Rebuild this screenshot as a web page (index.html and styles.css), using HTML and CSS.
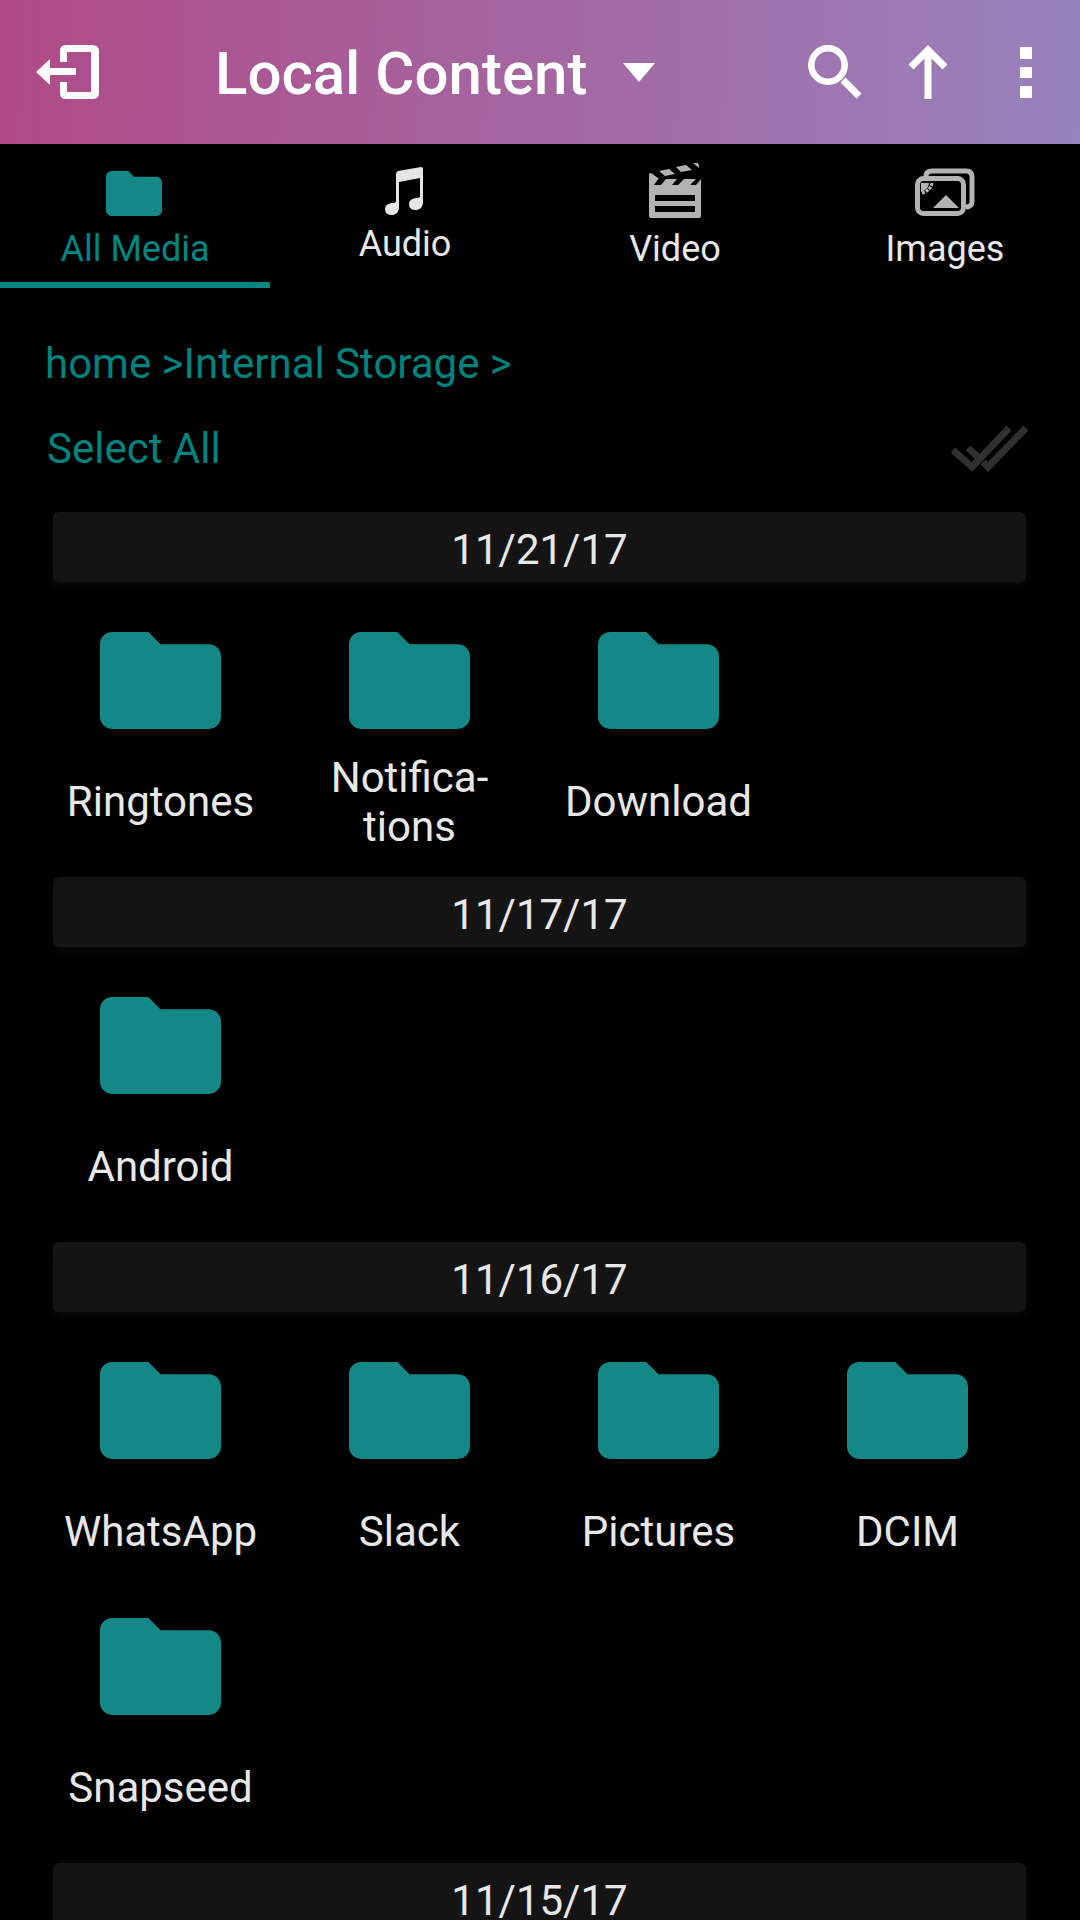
FILE: index.html
```html
<!DOCTYPE html>
<html lang="en">
<head>
<meta charset="utf-8">
<meta name="viewport" content="width=device-width, initial-scale=1">
<title>Local Content</title>
<link rel="stylesheet" href="styles.css">
</head>
<body>
<svg class="sprite" aria-hidden="true">
  <symbol id="folder" viewBox="2 4 20 16"><path d="M10 4H4c-1.100 0-2 .9-2 2v12c0 1.100.9 2 2 2h16c1.100 0 2-.9 2-2V8c0-1.100-.9-2-2-2h-8z"/></symbol>
</svg>
<header class="topbar">
  <button class="icon-button" aria-label="Exit">
    <svg width="63" height="54" viewBox="0 0 63 54" fill="#fff"><path d="M0 27 14 14v9h26v7H14v10zM24 17V6q0-6 6-6h26q7 0 7 6v42q0 6-7 6H30q-6 0-6-6V37h7v10h24V7H31v10z"/></svg>
  </button>
  <button class="source">
    <span>Local Content</span>
    <svg width="32" height="19" viewBox="0 0 32 19" fill="#fff"><path d="M0 0h32L16 19z"/></svg>
  </button>
  <div class="actions">
    <button class="icon-button" aria-label="Search">
      <svg width="54" height="54" viewBox="0 0 54 54" fill="none" stroke="#fff"><circle cx="20" cy="20" r="16.700" stroke-width="6.500"/><path d="M35 35 51 51" stroke-width="7"/></svg>
    </button>
    <button class="icon-button" aria-label="Up">
      <svg width="40" height="54" viewBox="0 0 40 54" fill="none" stroke="#fff" stroke-width="7"><path d="M20 54V6M3 22 20 5l17 17"/></svg>
    </button>
    <button class="icon-button" aria-label="More options">
      <svg width="12" height="54" viewBox="0 0 12 54" fill="#fff"><path d="M0 2h12v12H0zM0 22h12v11H0zM0 41h12v12H0z"/></svg>
    </button>
  </div>
</header>
<nav class="tabs">
  <button class="tab active">
    <svg width="60" height="66" viewBox="0 0 60 66"><use href="#folder" x="1" y="9" width="56" height="45"/></svg>
    <span>All Media</span>
  </button>
  <button class="tab">
    <svg width="60" height="56" viewBox="0 0 60 56" fill="#e6e6e6"><path d="M21 7q0-2 2-3L46 0q2 0 2 2v34q-1 7-7 7-7 0-7-6 0-5 7-6 4 0 4-2V11L24 15v26q-1 7-7 7-7 0-7-6 0-5 7-6 4 0 4-2z"/></svg>
    <span>Audio</span>
  </button>
  <button class="tab">
    <svg width="60" height="66" viewBox="0 0 60 66" fill="#b3b3b3"><path d="M4 13q0-2 2-2l7 5h1l-5 7h7l5-6h11l-5 6h6l6-6h12l-6 6h6l5-6v37q0 2-2 2H6q-2 0-2-2zM10 33v6h40v-6zM10 44v6h40v-6z" fill-rule="evenodd"/><path d="M14 9 24 7l6 5-10 2zM31 5l10-2 6 5-11 2zM48 1h4q2 0 2 5z"/></svg>
    <span>Video</span>
  </button>
  <button class="tab">
    <svg width="60" height="66" viewBox="0 0 60 66" fill="none" stroke="#b3b3b3" stroke-width="5"><rect x="2.500" y="16.500" width="46" height="35" rx="6"/><path d="M11 14q0-5 6-5h34q6 0 6 6v24q0 6-6 6"/><path d="M18 46 31 33l13 13z" fill="#b3b3b3" stroke="none"/><path d="M6 21h8q0 6-8 9z" fill="#b3b3b3" stroke="none"/><path d="M17 21q-1 7-10 10" stroke-width="3" stroke-dasharray="3 1"/></svg>
    <span>Images</span>
  </button>
</nav>
<main>
  <nav class="crumbs" aria-label="Path"><a href="#">home &gt;</a><a href="#">Internal Storage &gt;</a></nav>
  <button class="select-all">
    <span>Select All</span>
    <svg width="77" height="47" viewBox="0 0 77 47" fill="none" stroke="#303030" stroke-width="7"><path d="M2 25 21 42 58 3M17 23l11 10M32 37l5 5L75 3"/></svg>
  </button>

  <section class="group">
    <h2>11/21/17</h2>
    <div class="grid">
      <a class="item" href="#"><svg><use href="#folder"/></svg><span>Ringtones</span></a>
      <a class="item" href="#"><svg><use href="#folder"/></svg><span>Notifica-<br>tions</span></a>
      <a class="item" href="#"><svg><use href="#folder"/></svg><span>Download</span></a>
    </div>
  </section>
  <section class="group">
    <h2>11/17/17</h2>
    <div class="grid">
      <a class="item" href="#"><svg><use href="#folder"/></svg><span>Android</span></a>
    </div>
  </section>
  <section class="group">
    <h2>11/16/17</h2>
    <div class="grid">
      <a class="item" href="#"><svg><use href="#folder"/></svg><span>WhatsApp</span></a>
      <a class="item" href="#"><svg><use href="#folder"/></svg><span>Slack</span></a>
      <a class="item" href="#"><svg><use href="#folder"/></svg><span>Pictures</span></a>
      <a class="item" href="#"><svg><use href="#folder"/></svg><span>DCIM</span></a>
      <a class="item" href="#"><svg><use href="#folder"/></svg><span>Snapseed</span></a>
    </div>
  </section>
  <section class="group">
    <h2>11/15/17</h2>
  </section>
</main>
</body>
</html>
```
FILE: styles.css
```css
* { box-sizing: border-box; }
html, body { height: 100%; }
body {
  margin: 0;
  display: flex;
  flex-direction: column;
  overflow: hidden;
  background: #000;
  color: #e8e8e8;
  font: 42px/49px Roboto, sans-serif;
}
button {
  margin: 0;
  padding: 0;
  border: 0;
  background: none;
  color: inherit;
  font: inherit;
  cursor: pointer;
}
a { color: inherit; text-decoration: none; }
svg { display: block; flex: none; }
.sprite { position: absolute; width: 0; height: 0; }

.topbar {
  flex: none;
  display: flex;
  align-items: center;
  height: 144px;
  padding: 0 48px 0 36px;
  background: linear-gradient(92deg, #b04a86, #9883bd);
  color: #fff;
}
.source {
  display: flex;
  align-items: center;
  gap: 36px;
  margin-left: 116px;
  font-size: 60px;
  line-height: 72px;
  font-weight: 500;
}
.source span { padding-top: 4px; }
.actions {
  display: flex;
  align-items: center;
  margin-left: auto;
  gap: 46px;
}
.actions .icon-button:last-child { margin-left: 26px; }

.tabs {
  flex: none;
  display: grid;
  grid-template-columns: repeat(4, 1fr);
  height: 144px;
}
.tab {
  display: flex;
  flex-direction: column;
  align-items: center;
  justify-content: center;
  font-size: 36px;
  line-height: 42px;
}
.tab.active {
  color: #008783;
  fill: #148886;
  box-shadow: inset 0 -6px #008783;
}

main {
  flex: 1;
  min-height: 0;
  overflow: hidden;
  padding: 51px 54px 0 53px;
}
.crumbs { margin-left: -8px; color: #00837f; }
.select-all {
  display: flex;
  align-items: center;
  justify-content: space-between;
  width: 100%;
  margin: 36px 0 39px;
  color: #00837f;
}
.select-all span { margin-left: -6px; }
.select-all svg { margin-right: -2px; }

.group h2 {
  margin: 0;
  height: 70px;
  border-radius: 6px;
  background: #141414;
  box-shadow: 0 4px 12px #080d0b;
  text-align: center;
  font: inherit;
  line-height: 76px;
}
.grid {
  display: grid;
  grid-template-columns: repeat(4, 1fr);
  margin: 0 -6px 0 -17px;
  padding: 13px 0 26px;
}
.item {
  display: flex;
  flex-direction: column;
  align-items: center;
  gap: 24px;
  height: 256px;
  padding-top: 37px;
  text-align: center;
}
.item svg { width: 121px; height: 97px; fill: #148886; }
.item span {
  display: flex;
  flex-direction: column;
  justify-content: center;
  height: 97px;
}
```
